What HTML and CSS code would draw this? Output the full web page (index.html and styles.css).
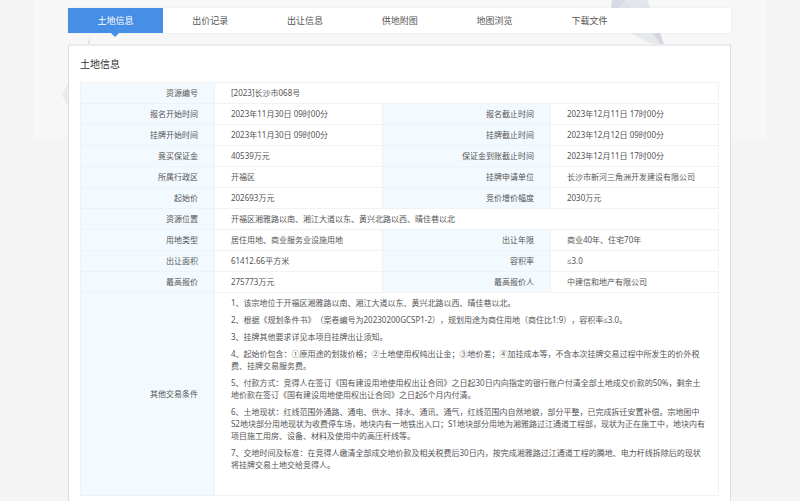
FILE: index.html
```
<!DOCTYPE html>
<html lang="zh-CN">
<head>
    <meta charset="utf-8">
    <title>土地信息</title>
    <meta name="viewport" content="width=device-width, initial-scale=1">
    <link rel="stylesheet" href="styles.css">
</head>
<body>
    <svg class="page-bg" viewBox="0 0 732 138" aria-hidden="true">
        <rect width="732" height="138" fill="#f7f7f7"/>
        <polygon points="578,0 592,0 583,10 577,10" fill="#d7dae4"/>
        <polygon points="592,0 599,10 583,10" fill="#dfe2ea"/>
        <polygon points="592,0 613,0 617,10 599,10" fill="#e3e5ec"/>
        <polygon points="594,32 619,32 629,45 616,43" fill="#e6e8ee"/>
        <polygon points="618,32 626,32 630,45 627,45" fill="#d3d7e1"/>
        <polygon points="57,36 53,45 55,45" fill="#d9dce5"/>
        <polygon points="34,83 28,95 34,107" fill="#eaebef"/>
    </svg>

    <div class="wrap">
        <nav class="tabs">
            <a class="tab active" href="#info">土地信息</a>
            <a class="tab" href="#price">出价记录</a>
            <a class="tab" href="#sell">出让信息</a>
            <a class="tab" href="#supply">供地附图</a>
            <a class="tab" href="#map">地图浏览</a>
            <a class="tab" href="#download">下载文件</a>
        </nav>

        <section class="panel" id="info">
            <h1>土地信息</h1>
            <table class="info">
                <colgroup>
                    <col class="c-label"><col class="c-value"><col class="c-value"><col class="c-value">
                </colgroup>
                <tr><th scope="row">资源编号</th><td colspan="3">[2023]长沙市068号</td></tr>
                <tr><th scope="row">报名开始时间</th><td>2023年11月30日 09时00分</td><th scope="row">报名截止时间</th><td>2023年12月11日 17时00分</td></tr>
                <tr><th scope="row">挂牌开始时间</th><td>2023年11月30日 09时00分</td><th scope="row">挂牌截止时间</th><td>2023年12月12日 09时00分</td></tr>
                <tr><th scope="row">竟买保证金</th><td>40539万元</td><th scope="row">保证金到账截止时间</th><td>2023年12月11日 17时00分</td></tr>
                <tr><th scope="row">所属行政区</th><td>开福区</td><th scope="row">挂牌申请单位</th><td>长沙市新河三角洲开发建设有限公司</td></tr>
                <tr><th scope="row">起始价</th><td>202693万元</td><th scope="row">竞价增价幅度</th><td>2030万元</td></tr>
                <tr><th scope="row">资源位置</th><td colspan="3">开福区湘雅路以南、湘江大道以东、黄兴北路以西、晴佳巷以北</td></tr>
                <tr><th scope="row">用地类型</th><td>居住用地、商业服务业设施用地</td><th scope="row">出让年限</th><td>商业40年、住宅70年</td></tr>
                <tr><th scope="row">出让面积</th><td>61412.66平方米</td><th scope="row">容积率</th><td>≤3.0</td></tr>
                <tr><th scope="row">最高报价</th><td>275773万元</td><th scope="row">最高报价人</th><td>中建信和地产有限公司</td></tr>
                <tr>
                    <th scope="row">其他交易条件</th>
                    <td class="terms" colspan="3">
                        <p>1、该宗地位于开福区湘雅路以南、湘江大道以东、黄兴北路以西、晴佳巷以北。</p>
                        <p>2、根据《规划条件书》（案卷编号为20230200GCSP1-2），规划用途为商住用地（商住比1:9），容积率≤3.0。</p>
                        <p>3、挂牌其他要求详见本项目挂牌出让须知。</p>
                        <p>4、起始价包含：①原用途的划拨价格；②土地使用权纯出让金；③地价差；④加挂成本等，不含本次挂牌交易过程中所发生的价外税费、挂牌交易服务费。</p>
                        <p>5、付款方式：竞得人在签订《国有建设用地使用权出让合同》之日起30日内向指定的银行账户付清全部土地成交价款的50%，剩余土地价款在签订《国有建设用地使用权出让合同》之日起6个月内付清。</p>
                        <p>6、土地现状：红线范围外通路、通电、供水、排水、通讯、通气，红线范围内自然地貌，部分平整，已完成拆迁安置补偿。宗地图中S2地块部分用地现状为收费停车场，地块内有一地铁出入口；S1地块部分用地为湘雅路过江通道工程部，现状为正在施工中，地块内有项目施工用房、设备、材料及使用中的高压杆线等。</p>
                        <p>7、交地时间及标准：在竞得人缴清全部成交地价款及相关税费后30日内，按完成湘雅路过江通道工程的腾地、电力杆线拆除后的现状将挂牌交易土地交给竞得人。</p>
                    </td>
                </tr>
            </table>
        </section>
    </div>
</body>
</html>
```
FILE: styles.css
```
* {
    box-sizing: border-box;
}
html {
    overflow: hidden;
}
body {
    margin: 0;
    background: #f4f4f4;
    color: #555;
    font-family: "Noto Sans", "Open Sans", "Noto Sans CJK SC", sans-serif;
    font-size: 8px;
    line-height: 12px;
    text-spacing-trim: space-all;
}
/* faint shapes behind the content */
.page-bg {
    position: absolute;
    top: 0;
    left: 50%;
    width: 732px;
    height: 138px;
    transform: translateX(-50%);
    z-index: -1;
}
.wrap {
    max-width: 680px;
    margin: 0 auto;
    padding: 8px 9px 0 8px;
}
.tabs {
    display: flex;
    background: #fff;
    box-shadow: 0 0 1px #ddd;
}
.tab {
    flex: 0 0 14.3%;
    color: #555;
    font-size: 9px;
    line-height: 25px;
    text-align: center;
    text-decoration: none;
}
.tab.active {
    position: relative;
    background: #478ee6;
    color: #fff;
}
.tab.active::after {
    content: "";
    position: absolute;
    top: 100%;
    left: 50%;
    margin-left: -4px;
    border: 4px solid transparent;
    border-top-color: #478ee6;
    border-bottom: 0;
}
.panel {
    margin-top: 11px;
    padding: 11px 11px 20px;
    background: #fff;
    border: 1px solid #ddd;
    border-top: 2px solid #ececec;
}
h1 {
    margin: 0 0 11px;
    color: #333;
    font-size: 10px;
    font-weight: normal;
    line-height: 14px;
}
.info {
    width: 100%;
    table-layout: fixed;
    border-collapse: collapse;
}
.c-label {
    width: 21%;
}
.info th,
.info td {
    height: 21px;
    padding: 4px 16px;
    border: 1px solid #f2f2f2;
    text-align: left;
}
.info th {
    background: #f3faff;
    font-weight: normal;
    text-align: right;
}
.info .terms {
    padding-right: 12px;
    padding-bottom: 19px;
}
.terms p {
    margin: 0 0 5px;
}
```
